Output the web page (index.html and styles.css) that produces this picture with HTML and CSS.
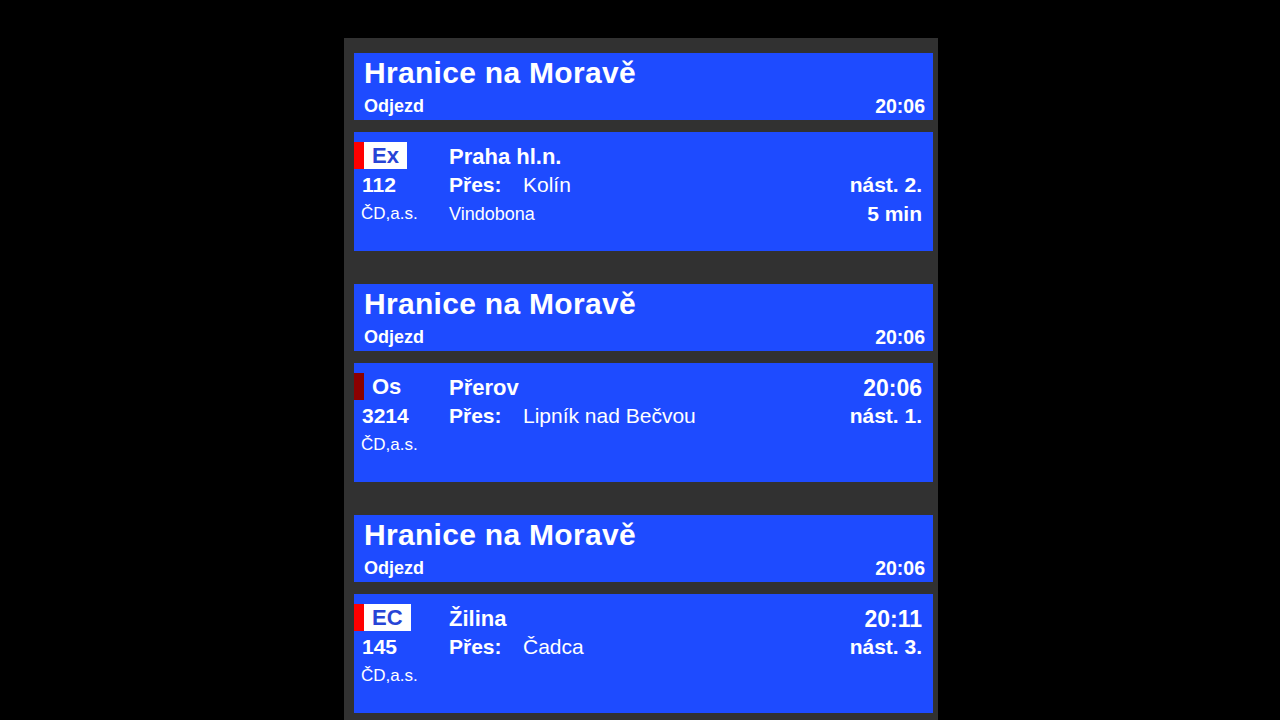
FILE: index.html
```html
<!DOCTYPE html>
<html lang="cs">
<head>
    <meta charset="UTF-8">
    <meta name="viewport" content="width=device-width, initial-scale=1.0">
    <title>Hranice na Moravě - Odjezd</title>
    <link rel="stylesheet" href="styles.css">
</head>
<body>
    <div id="board">

        <!-- Panel 1 -->
        <div class="station">
            <div class="station-name">Hranice na Moravě</div>
            <div class="station-row">
                <span>Odjezd</span>
                <span class="clock">20:06</span>
            </div>
        </div>
        <div class="train">
            <div class="badge"><span class="bar red"></span><span class="kind boxed">Ex</span></div>
            <div class="dest">Praha hl.n.</div>
            <div class="right big"></div>

            <div class="num">112</div>
            <div class="via"><span class="via-label">Přes:</span>Kolín</div>
            <div class="right">nást. 2.</div>

            <div class="carrier">ČD,a.s.</div>
            <div class="name">Vindobona</div>
            <div class="right">5 min</div>
        </div>

        <!-- Panel 2 -->
        <div class="station">
            <div class="station-name">Hranice na Moravě</div>
            <div class="station-row">
                <span>Odjezd</span>
                <span class="clock">20:06</span>
            </div>
        </div>
        <div class="train">
            <div class="badge"><span class="bar dark"></span><span class="kind">Os</span></div>
            <div class="dest">Přerov</div>
            <div class="right big">20:06</div>

            <div class="num">3214</div>
            <div class="via"><span class="via-label">Přes:</span>Lipník nad Bečvou</div>
            <div class="right">nást. 1.</div>

            <div class="carrier">ČD,a.s.</div>
            <div class="name"></div>
            <div class="right"></div>
        </div>

        <!-- Panel 3 -->
        <div class="station">
            <div class="station-name">Hranice na Moravě</div>
            <div class="station-row">
                <span>Odjezd</span>
                <span class="clock">20:06</span>
            </div>
        </div>
        <div class="train">
            <div class="badge"><span class="bar red"></span><span class="kind boxed">EC</span></div>
            <div class="dest">Žilina</div>
            <div class="right big">20:11</div>

            <div class="num">145</div>
            <div class="via"><span class="via-label">Přes:</span>Čadca</div>
            <div class="right">nást. 3.</div>

            <div class="carrier">ČD,a.s.</div>
            <div class="name"></div>
            <div class="right"></div>
        </div>

    </div>
</body>
</html>
```

FILE: styles.css
```css
body {
    margin: 0;
    padding: 0;
    background-color: #000;
    overflow: hidden;
    font-family: "Liberation Sans", Arial, sans-serif;
    color: #fff;
}
#board {
    width: 579px;
    margin: 38px 0 0 344px;
    padding: 15px 5px 40px 10px;
    background-color: #313131;
}

/* station header */
.station {
    background-color: #1e4bff;
    height: 67px;
    box-sizing: border-box;
    padding: 2px 8px 0 10px;
}
.station-name {
    font-size: 30px;
    font-weight: bold;
    line-height: 36px;
    letter-spacing: 0.3px;
}
.station-row {
    display: flex;
    justify-content: space-between;
    margin-top: 4px;
    font-size: 18px;
    font-weight: bold;
    line-height: 22px;
}
.clock {
    font-size: 19.5px;
}

/* train card */
.train {
    background-color: #1e4bff;
    margin: 12px 0 33px 0;
    height: 119px;
    box-sizing: border-box;
    padding: 10px 11px 0 0;
    display: grid;
    grid-template-columns: 95px 1fr auto;
    grid-template-rows: 28px 30px 28px;
}
.badge {
    display: flex;
    height: 27px;
    font-size: 22px;
    font-weight: bold;
    line-height: 27px;
}
.bar {
    width: 10px;
    height: 27px;
}
.bar.red { background-color: #ff0000; }
.bar.dark { background-color: #8b0000; }
.kind {
    padding: 0 8px;
}
.kind.boxed {
    background-color: #fff;
    color: #2744d6;
}
.dest {
    font-size: 22px;
    font-weight: bold;
    line-height: 28px;
    padding-top: 1px;
}
.right {
    text-align: right;
    font-size: 21px;
    font-weight: bold;
    line-height: 28px;
}
.right.big {
    font-size: 23px;
    padding-top: 1px;
}
.num {
    padding-left: 8px;
    font-size: 21px;
    font-weight: bold;
    line-height: 30px;
}
.via {
    font-size: 21px;
    line-height: 30px;
}
.via-label {
    display: inline-block;
    width: 74px;
    font-weight: bold;
}
.via + .right {
    line-height: 30px;
}
.carrier {
    padding-left: 7px;
    font-size: 17px;
    line-height: 28px;
}
.name {
    font-size: 18px;
    line-height: 28px;
}
```
